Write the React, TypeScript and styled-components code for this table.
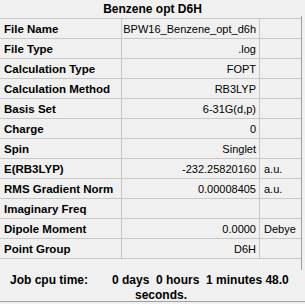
import React from "react";
import styled, { createGlobalStyle } from "styled-components";

const GlobalStyle = createGlobalStyle`
  html, body {
    margin: 0;
    padding: 0;
    background: #f0f0f0;
  }
  body {
    font-family: "Liberation Sans", Arial, sans-serif;
    font-size: 12px;
    color: #000;
  }
`;

const Window = styled.div`
  width: 305px;
  height: 304px;
  overflow: hidden;
  background: #f0f0f0;
`;

const Title = styled.div`
  height: 16px;
  line-height: 16px;
  padding-top: 1px;
  box-sizing: border-box;
  text-align: center;
  font-weight: 700;
`;

const Panel = styled.div`
  width: 302px;
  height: 254px;
  box-sizing: border-box;
  border-right: 1px solid #a0a0a0;
  padding-top: 2px;
`;

const Grid = styled.div`
  border-top: 1px solid #c8c8c8;
  width: 301px;
`;

const Row = styled.div`
  display: grid;
  grid-template-columns: 122px 138px 41px;
  height: 20px;
  box-sizing: border-box;
  border-bottom: 1px solid #c8c8c8;
`;

const Cell = styled.div<{ $align?: "left" | "right"; $bold?: boolean; $divider?: boolean }>`
  display: flex;
  align-items: center;
  justify-content: ${(p) => (p.$align === "right" ? "flex-end" : "flex-start")};
  padding: ${(p) => (p.$align === "right" ? "0 3px 0 0" : "0 0 0 4px")};
  font-weight: ${(p) => (p.$bold ? 700 : 400)};
  font-size: ${(p) => (p.$bold ? "11.5px" : "11px")};
  border-right: ${(p) => (p.$divider ? "1px solid #c8c8c8" : "none")};
  white-space: nowrap;
  min-width: 0;
`;

const Footer = styled.div`
  height: 32px;
  box-sizing: border-box;
  border-bottom: 1px solid #a0a0a0;
  padding-top: 3px;
  font-weight: 700;
  line-height: 15px;
`;

const FooterLine = styled.div<{ $indent: number }>`
  display: flex;
  padding-left: ${(p) => p.$indent}px;
  white-space: pre;
`;

const FooterLabel = styled.span`
  width: 102px;
`;

const rows = [
  { label: "File Name", value: "BPW16_Benzene_opt_d6h", unit: "" },
  { label: "File Type", value: ".log", unit: "" },
  { label: "Calculation Type", value: "FOPT", unit: "" },
  { label: "Calculation Method", value: "RB3LYP", unit: "" },
  { label: "Basis Set", value: "6-31G(d,p)", unit: "" },
  { label: "Charge", value: "0", unit: "" },
  { label: "Spin", value: "Singlet", unit: "" },
  { label: "E(RB3LYP)", value: "-232.25820160", unit: "a.u." },
  { label: "RMS Gradient Norm", value: "0.00008405", unit: "a.u." },
  { label: "Imaginary Freq", value: "", unit: "" },
  { label: "Dipole Moment", value: "0.0000", unit: "Debye" },
  { label: "Point Group", value: "D6H", unit: "" },
];

export default function App() {
  return (
    <Window>
      <GlobalStyle />
      <Title>Benzene opt D6H</Title>
      <Panel>
        <Grid>
          {rows.map((r) => (
            <Row key={r.label}>
              <Cell $bold $divider>
                {r.label}
              </Cell>
              <Cell $align="right" $divider>
                {r.value}
              </Cell>
              <Cell>{r.unit}</Cell>
            </Row>
          ))}
        </Grid>
      </Panel>
      <Footer>
        <FooterLine $indent={10}>
          <FooterLabel>Job cpu time:</FooterLabel>
          <span>0 days  0 hours  1 minutes 48.0</span>
        </FooterLine>
        <FooterLine $indent={135}>seconds.</FooterLine>
      </Footer>
    </Window>
  );
}
